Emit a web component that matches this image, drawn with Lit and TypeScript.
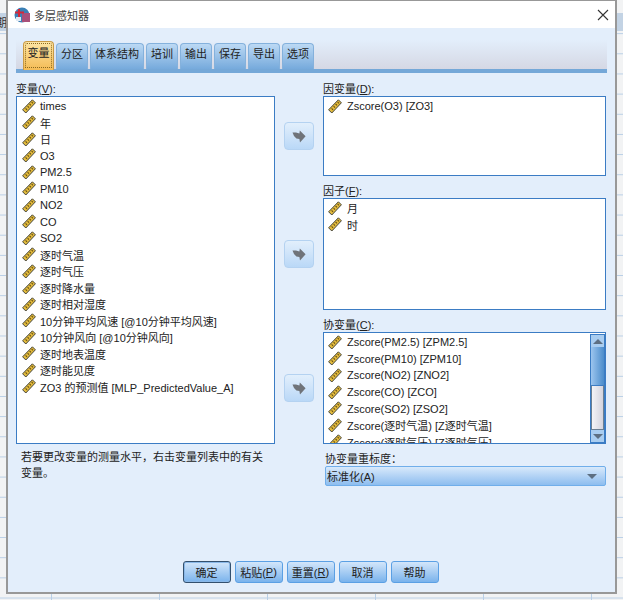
import { LitElement, html, css } from "lit";
import { customElement } from "lit/decorators.js";

const ruler = html`<svg class="ruler" width="14" height="15" viewBox="0 0 14 15">
  <path d="M10.4 .8 13.4 3.8 3.8 14 .6 10.8Z" fill="#e3bb3c" stroke="#45453c" stroke-width="1"/>
  <path d="M3.6 9.4 5 10.8M5.6 7.2 7 8.6M7.6 5 9 6.4M9.6 2.9 11 4.3" stroke="#6a5214" stroke-width="1.1" fill="none"/>
</svg>`;

const arrow = html`<svg width="14" height="13" viewBox="0 0 14 13"><path d="M.5 2.5 4 2.4 7.4 3.6 7.8 .4 13.6 6.2 8 12.4 7.4 9 4.4 8.6 2 6Z" fill="#6f7379"/></svg>`;

const u = (label: string, key: string, rest = "") =>
  html`${label}(<span class="ul">${key}</span>)${rest}`;

const VARS = ["times","年","日","O3","PM2.5","PM10","NO2","CO","SO2","逐时气温","逐时气压","逐时降水量","逐时相对湿度","10分钟平均风速 [@10分钟平均风速]","10分钟风向 [@10分钟风向]","逐时地表温度","逐时能见度","ZO3 的预测值 [MLP_PredictedValue_A]"];
const COVARS = ["Zscore(PM2.5) [ZPM2.5]","Zscore(PM10) [ZPM10]","Zscore(NO2) [ZNO2]","Zscore(CO) [ZCO]","Zscore(SO2) [ZSO2]","Zscore(逐时气温) [Z逐时气温]","Zscore(逐时气压) [Z逐时气压]"];
const TABS = ["变量","分区","体系结构","培训","输出","保存","导出","选项"];

@customElement("app-root")
export class AppRoot extends LitElement {
  static styles = css`
    :host { display: block; width: 623px; height: 600px; overflow: hidden; font-family: "Liberation Sans", "Noto Sans CJK SC", sans-serif; font-size: 11px; color: #222; }
    .desk { position: relative; width: 623px; height: 600px; display: flex; flex-direction: column; background-color: #f2f3f4;
      background-image: linear-gradient(#c3d3e4, #c3d3e4), linear-gradient(#b9cfe6 1px, transparent 1px), linear-gradient(90deg, #b9cfe6 1px, transparent 1px);
      background-repeat: no-repeat, repeat, repeat;
      background-size: 100% 18px, 108px 20.16px, 108px 20.16px;
      background-position: 0 13px, 51px 13px, 51px 13px; }
    .peek { position: absolute; left: -4px; top: 14px; font-size: 11px; color: #333; }
    .dialog { position: relative; box-sizing: border-box; margin-left: 6px; width: 611px; height: 594px; background: #e3eefb; border: 2px solid #989898; border-top-width: 1px; display: flex; flex-direction: column; flex: none; }
    .title { height: 27px; flex: none; background: #fff; display: flex; align-items: center; padding: 0 6px 0 6px; gap: 4px; font-size: 11px; color: #444; }
    .title .t { flex: 1; }
    .body { flex: 1; display: flex; flex-direction: column; padding: 12px 8px 0 8px; min-height: 0; background: #e3eefb; }
    .tabbar { height: 29px; flex: none; display: flex; align-items: flex-end; gap: 2px; padding-left: 7px; background: linear-gradient(#e3eefb, #d5d8e4); border-bottom: 4px solid #75a8d8; }
    .tab { height: 26px; box-sizing: border-box; border: 1px solid #84b1dc; border-bottom: 0; border-radius: 4px 4px 0 0; background: linear-gradient(#bcd9f4, #76aadc); padding: 4px 4px 0; font-size: 11px; line-height: 13px; color: #222; white-space: nowrap; }
    .tab.on { height: 29px; padding: 5px 3.5px 0; margin-bottom: -1px; background: linear-gradient(#fde5a4, #f4bb55); border: 1px solid #c99a45; border-bottom: 0; outline: 1px dotted #8a6a20; outline-offset: -3px; }
    .main { display: grid; grid-template-columns: 259px 48px 283px; flex: 1; padding-top: 10px; min-height: 0; }
    .col { display: flex; flex-direction: column; }
    .label { height: 13px; line-height: 13px; font-size: 11px; color: #222; white-space: nowrap; }
    .ul { text-decoration: underline; }
    .list { box-sizing: border-box; background: #fff; border: 1px solid #3b7cc4; overflow: hidden; padding: 1px 2px 0 4px; position: relative; flex: none; }
    .row { height: 16.6px; display: flex; align-items: center; gap: 5px; white-space: nowrap; font-size: 11px; color: #222; }
    .ruler { flex: none; }
    .vars { height: 348px; padding-left: 5px; }
    .vars .row { gap: 4px; height: 16.5px; }
    .dep { height: 80px; }
    .fac { height: 112px; }
    .cov { height: 112px; padding-right: 16px; }
    .gap { height: 9px; flex: none; }
    .hint { margin-top: 5px; padding-left: 5px; font-size: 11px; line-height: 16px; width: 245px; color: #222; }
    .mid { display: flex; flex-direction: column; align-items: center; }
    .go { width: 30px; height: 28px; box-sizing: border-box; border: 1px solid #b4d2f1; border-radius: 4px; background: linear-gradient(#e2effc, #bad8f7); display: flex; align-items: center; justify-content: center; flex: none; }
    .sp1 { height: 39px; flex: none; } .sp2 { height: 90px; flex: none; } .sp3 { height: 106px; flex: none; }
    .sb { position: absolute; right: 0; top: 1px; bottom: 0; width: 15px; box-sizing: border-box; border: 1px solid #3b7cc4; background: #a9cdf0; display: flex; flex-direction: column; }
    .sb .a { height: 12px; flex: none; background: #a9cdf0; display: flex; align-items: center; justify-content: center; }
    .tri { width: 0; height: 0; border-left: 5px solid transparent; border-right: 5px solid transparent; }
    .up { border-bottom: 5px solid #5d6f82; } .down { border-top: 5px solid #5d6f82; }
    .thumb { height: 38px; flex: none; background: linear-gradient(90deg, #9cc5ee, #4b8ccb); }
    .track { flex: 1; background: linear-gradient(90deg, #f4f4f7, #d4d4de); border: 1px solid #6b7f92; border-top-color: #3b7cc4; }
    .scale { margin-top: 9px; padding-left: 2px; height: 13px; line-height: 13px; font-size: 11px; }
    .select { height: 20px; box-sizing: border-box; margin: 0 0 0 2px; border: 1px solid #70aeea; border-radius: 2px; background: linear-gradient(#d8e9fb, #8dbdef); display: flex; align-items: center; justify-content: space-between; padding: 0 8px 0 1px; font-size: 11px; }
    .select .tri { border-top: 5px solid #5d6f82; }
    .footer { height: 22px; flex: none; display: flex; justify-content: center; gap: 4px; margin-bottom: 9px; padding-right: 2px; }
    .btn { width: 48px; height: 22px; box-sizing: border-box; border: 1px solid #5ba0e4; border-radius: 3px; background: linear-gradient(#d3e6fa, #7ab3ec); font-size: 11px; color: #222; display: flex; align-items: center; justify-content: center; white-space: nowrap; }
    .btn.def { border: 1px solid #33506e; box-shadow: inset 0 0 0 1px #8ab8e8; }
  `;

  render() {
    const row = (t: string) => html`<div class="row">${ruler}<span>${t}</span></div>`;
    return html`<div class="desk"><span class="peek">期</span><div class="dialog">
      <div class="title">
        <svg width="16" height="16" viewBox="0 0 16 16"><circle cx="8" cy="8" r="7.5" fill="#3a7fb5"/><rect x="8" y="6" width="8" height="9" fill="#a8507a"/><path d="M1 5.5H10M5 2V10" stroke="#d2283a" stroke-width="2"/><rect x="2" y="10" width="5" height="4" fill="#dfe8f2"/></svg>
        <span class="t">多层感知器</span>
        <svg width="12" height="12" viewBox="0 0 12 12"><path d="M1 1 11 11M11 1 1 11" stroke="#333" stroke-width="1.1" fill="none"/></svg>
      </div>
      <div class="body">
        <div class="tabbar">${TABS.map((t, i) => html`<div class="tab ${i === 0 ? "on" : ""}">${t}</div>`)}</div>
        <div class="main">
          <div class="col">
            <div class="label">${u("变量", "V", ":")}</div>
            <div class="list vars">${VARS.map(row)}</div>
            <div class="hint">若要更改变量的测量水平，右击变量列表中的有关变量。</div>
          </div>
          <div class="mid">
            <div class="sp1"></div><div class="go">${arrow}</div>
            <div class="sp2"></div><div class="go">${arrow}</div>
            <div class="sp3"></div><div class="go">${arrow}</div>
          </div>
          <div class="col">
            <div class="label">${u("因变量", "D", ":")}</div>
            <div class="list dep">${row("Zscore(O3) [ZO3]")}</div>
            <div class="gap"></div>
            <div class="label">${u("因子", "F", ":")}</div>
            <div class="list fac">${row("月")}${row("时")}</div>
            <div class="gap"></div>
            <div class="label">${u("协变量", "C", ":")}</div>
            <div class="list cov">${COVARS.map(row)}
              <div class="sb"><div class="a"><div class="tri up"></div></div><div class="thumb"></div><div class="track"></div><div class="a"><div class="tri down"></div></div></div>
            </div>
            <div class="scale">协变量重标度：</div>
            <div class="select"><span>标准化(A)</span><div class="tri"></div></div>
          </div>
        </div>
        <div class="footer">
          <div class="btn def">确定</div>
          <div class="btn">${u("粘贴", "P")}</div>
          <div class="btn">${u("重置", "R")}</div>
          <div class="btn">取消</div>
          <div class="btn">帮助</div>
        </div>
      </div>
    </div></div>`;
  }
}
